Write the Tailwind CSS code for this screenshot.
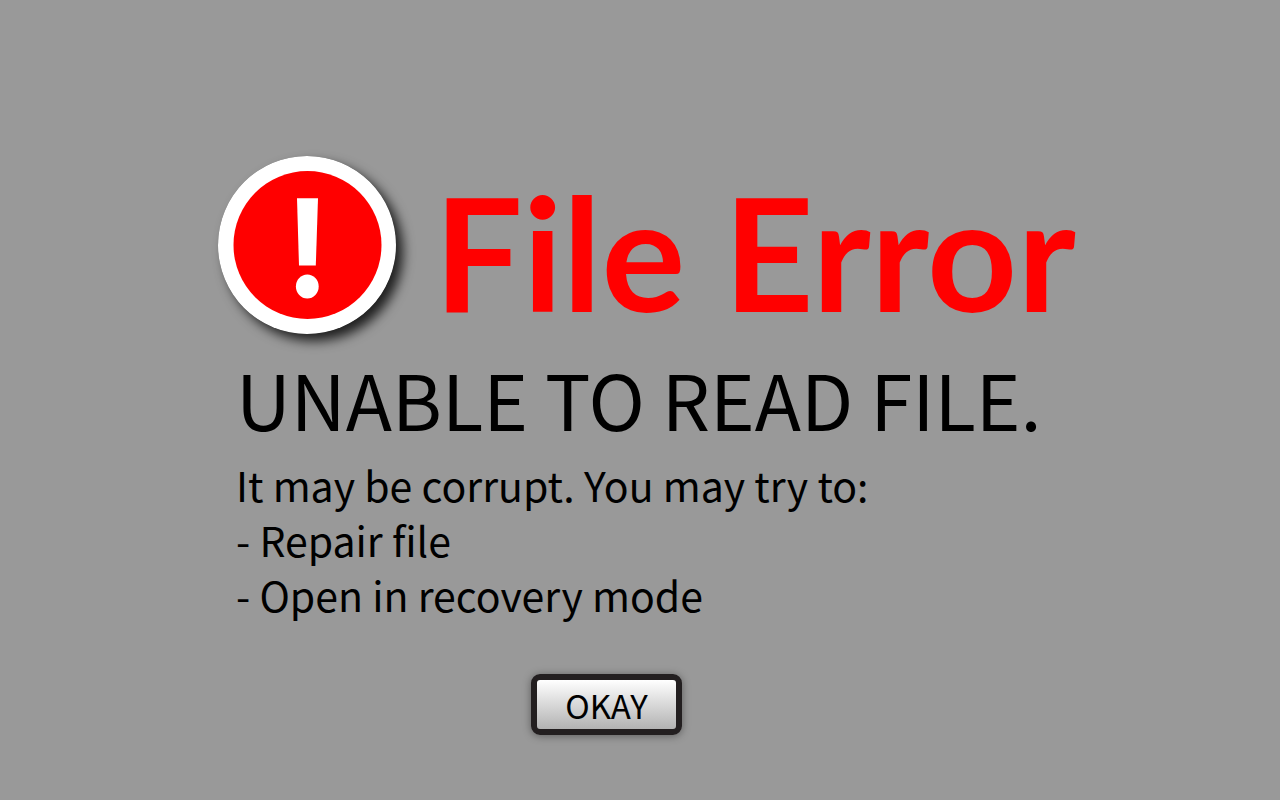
<!DOCTYPE html>
<html lang="en">
<head>
  <meta charset="UTF-8" />
  <meta name="viewport" content="width=device-width, initial-scale=1.0" />
  <title>File Error</title>
  <script src="https://cdn.jsdelivr.net/npm/@tailwindcss/browser@4"></script>
</head>
<body class="bg-[#999999] text-black min-h-screen font-['Noto_Sans_CJK_SC','Open_Sans',sans-serif]">
  <main class="mx-auto max-w-[844px] pt-39 pb-16">

    <!-- TITLE -->
    <div class="flex items-start gap-[38px]">
      <svg class="shrink-0 w-[178px] h-[178px] rounded-full shadow-[7px_7px_12px_rgba(0,0,0,0.8)]" viewBox="0 0 178 178" aria-hidden="true">
        <circle cx="89" cy="89" r="89" fill="#fff" />
        <circle cx="89.5" cy="89" r="74" fill="#f00" />
        <path d="M79 42.3H100L97.8 109.5H81Z" fill="#fff" />
        <ellipse cx="89.3" cy="130.5" rx="11.4" ry="12" fill="#fff" />
      </svg>
      <h1 class="pt-1.5 text-[#ff0000] text-[157px] leading-[178px] font-bold font-['Lato','Open_Sans',sans-serif] whitespace-nowrap">File Error</h1>
    </div>

    <!-- MESSAGE -->
    <div class="pl-[18px]">
      <h2 class="mt-2.5 text-[76px] leading-[96px] whitespace-nowrap">UNABLE TO READ FILE.</h2>
      <div class="mt-[11px] text-[41px] leading-[55px]">
        <p>It may be corrupt. You may try to:</p>
        <ul>
          <li>- Repair file</li>
          <li>- Open in recovery mode</li>
        </ul>
      </div>
    </div>

    <div class="mt-[52px] pl-[313px]">
      <button type="button" class="w-[151px] h-[61px] rounded-[9px] border-6 border-[#231f20] bg-linear-to-b from-white to-[#b3b3b3] text-[33px] leading-[48px] shadow-[0_1px_8px_rgba(0,0,0,0.4)]">OKAY</button>
    </div>
  </main>
</body>
</html>
